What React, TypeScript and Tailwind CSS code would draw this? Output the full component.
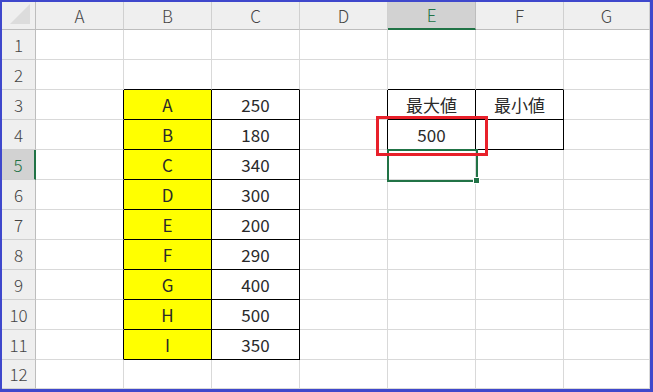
import React from 'react';

const cols = ['A', 'B', 'C', 'D', 'E', 'F', 'G'];

const data: Record<string, string> = {
  B3: 'A', C3: '250',
  B4: 'B', C4: '180',
  B5: 'C', C5: '340',
  B6: 'D', C6: '300',
  B7: 'E', C7: '200',
  B8: 'F', C8: '290',
  B9: 'G', C9: '400',
  B10: 'H', C10: '500',
  B11: 'I', C11: '350',
  E3: '最大値', F3: '最小値',
  E4: '500',
};

// which cells carry a black right / bottom edge (table outlines)
const inTable = (c: string, r: number) =>
  ((c === 'B' || c === 'C') && r >= 3 && r <= 11) ||
  ((c === 'E' || c === 'F') && r >= 3 && r <= 4);

const blackRight = (c: string, r: number) => {
  const i = cols.indexOf(c);
  return inTable(c, r) || (i < cols.length - 1 && inTable(cols[i + 1], r));
};
const blackBottom = (c: string, r: number) => inTable(c, r) || inTable(c, r + 1);

const Cell: React.FC<{ col: string; row: number }> = ({ col, row }) => {
  const key = `${col}${row}`;
  const yellow = col === 'B' && row >= 3 && row <= 11;
  return (
    <div
      className={`flex items-center justify-center border-r border-b ${
        blackRight(col, row) ? 'border-r-black' : 'border-r-[#d9d9d9]'
      } ${blackBottom(col, row) ? 'border-b-black' : 'border-b-[#d9d9d9]'} ${
        yellow ? 'bg-[#ffff00]' : 'bg-white'
      } text-[17px] text-[#2a2a2a]`}
    >
      {data[key] ?? ''}
    </div>
  );
};

export default function App() {
  const rows = Array.from({ length: 12 }, (_, i) => i + 1);
  return (
    <div
      className="relative w-[653px] h-[392px] overflow-hidden border-l-2 border-t-2 border-r-[3px] border-b-[3px] border-[#3f48cc] bg-white"
      style={{ fontFamily: '"Noto Sans CJK JP", "Noto Sans", sans-serif' }}
    >
      <div className="grid grid-cols-[34px_repeat(6,88px)_1fr] grid-rows-[28px_repeat(11,30px)_1fr] h-full">
        {/* corner */}
        <div className="relative bg-[#efefef] border-r border-b border-[#bdbdbd]">
          <div className="absolute right-[5px] bottom-[5px] w-0 h-0 border-l-[20px] border-l-transparent border-b-[20px] border-b-[#dcdcdc]" />
        </div>
        {cols.map((c) =>
          c === 'E' ? (
            <div
              key={c}
              className="flex items-center justify-center bg-[#d2d2d2] border-r border-[#bdbdbd] border-b-2 border-b-[#217346] text-[17px] font-light text-[#217346]"
            >
              {c}
            </div>
          ) : (
            <div
              key={c}
              className="flex items-center justify-center bg-[#efefef] border-r border-b border-[#d0d0d0] border-b-[#bdbdbd] text-[17px] font-light text-[#444]"
            >
              {c}
            </div>
          )
        )}
        {rows.map((r) => (
          <React.Fragment key={r}>
            {r === 5 ? (
              <div className="flex items-center justify-center bg-[#d2d2d2] border-r-2 border-r-[#217346] border-b border-b-[#d0d0d0] text-[17px] font-light text-[#217346]">
                {r}
              </div>
            ) : (
              <div className="flex items-center justify-center bg-[#efefef] border-r border-b border-[#d0d0d0] border-r-[#bdbdbd] text-[17px] font-light text-[#444]">
                {r}
              </div>
            )}
            {cols.map((c) => (
              <Cell key={c} col={c} row={r} />
            ))}
          </React.Fragment>
        ))}
      </div>

      {/* active cell E5 */}
      <div className="absolute left-[385px] top-[147px] w-[91px] h-[33px] border-2 border-[#217346]" />
      <div className="absolute left-[472px] top-[176px] w-[5px] h-[5px] bg-[#217346] outline outline-1 outline-white" />

      {/* red annotation around E4 */}
      <div className="absolute left-[374px] top-[114px] w-[112px] h-[40px] border-[3px] border-[#e8202a]" />
    </div>
  );
}
